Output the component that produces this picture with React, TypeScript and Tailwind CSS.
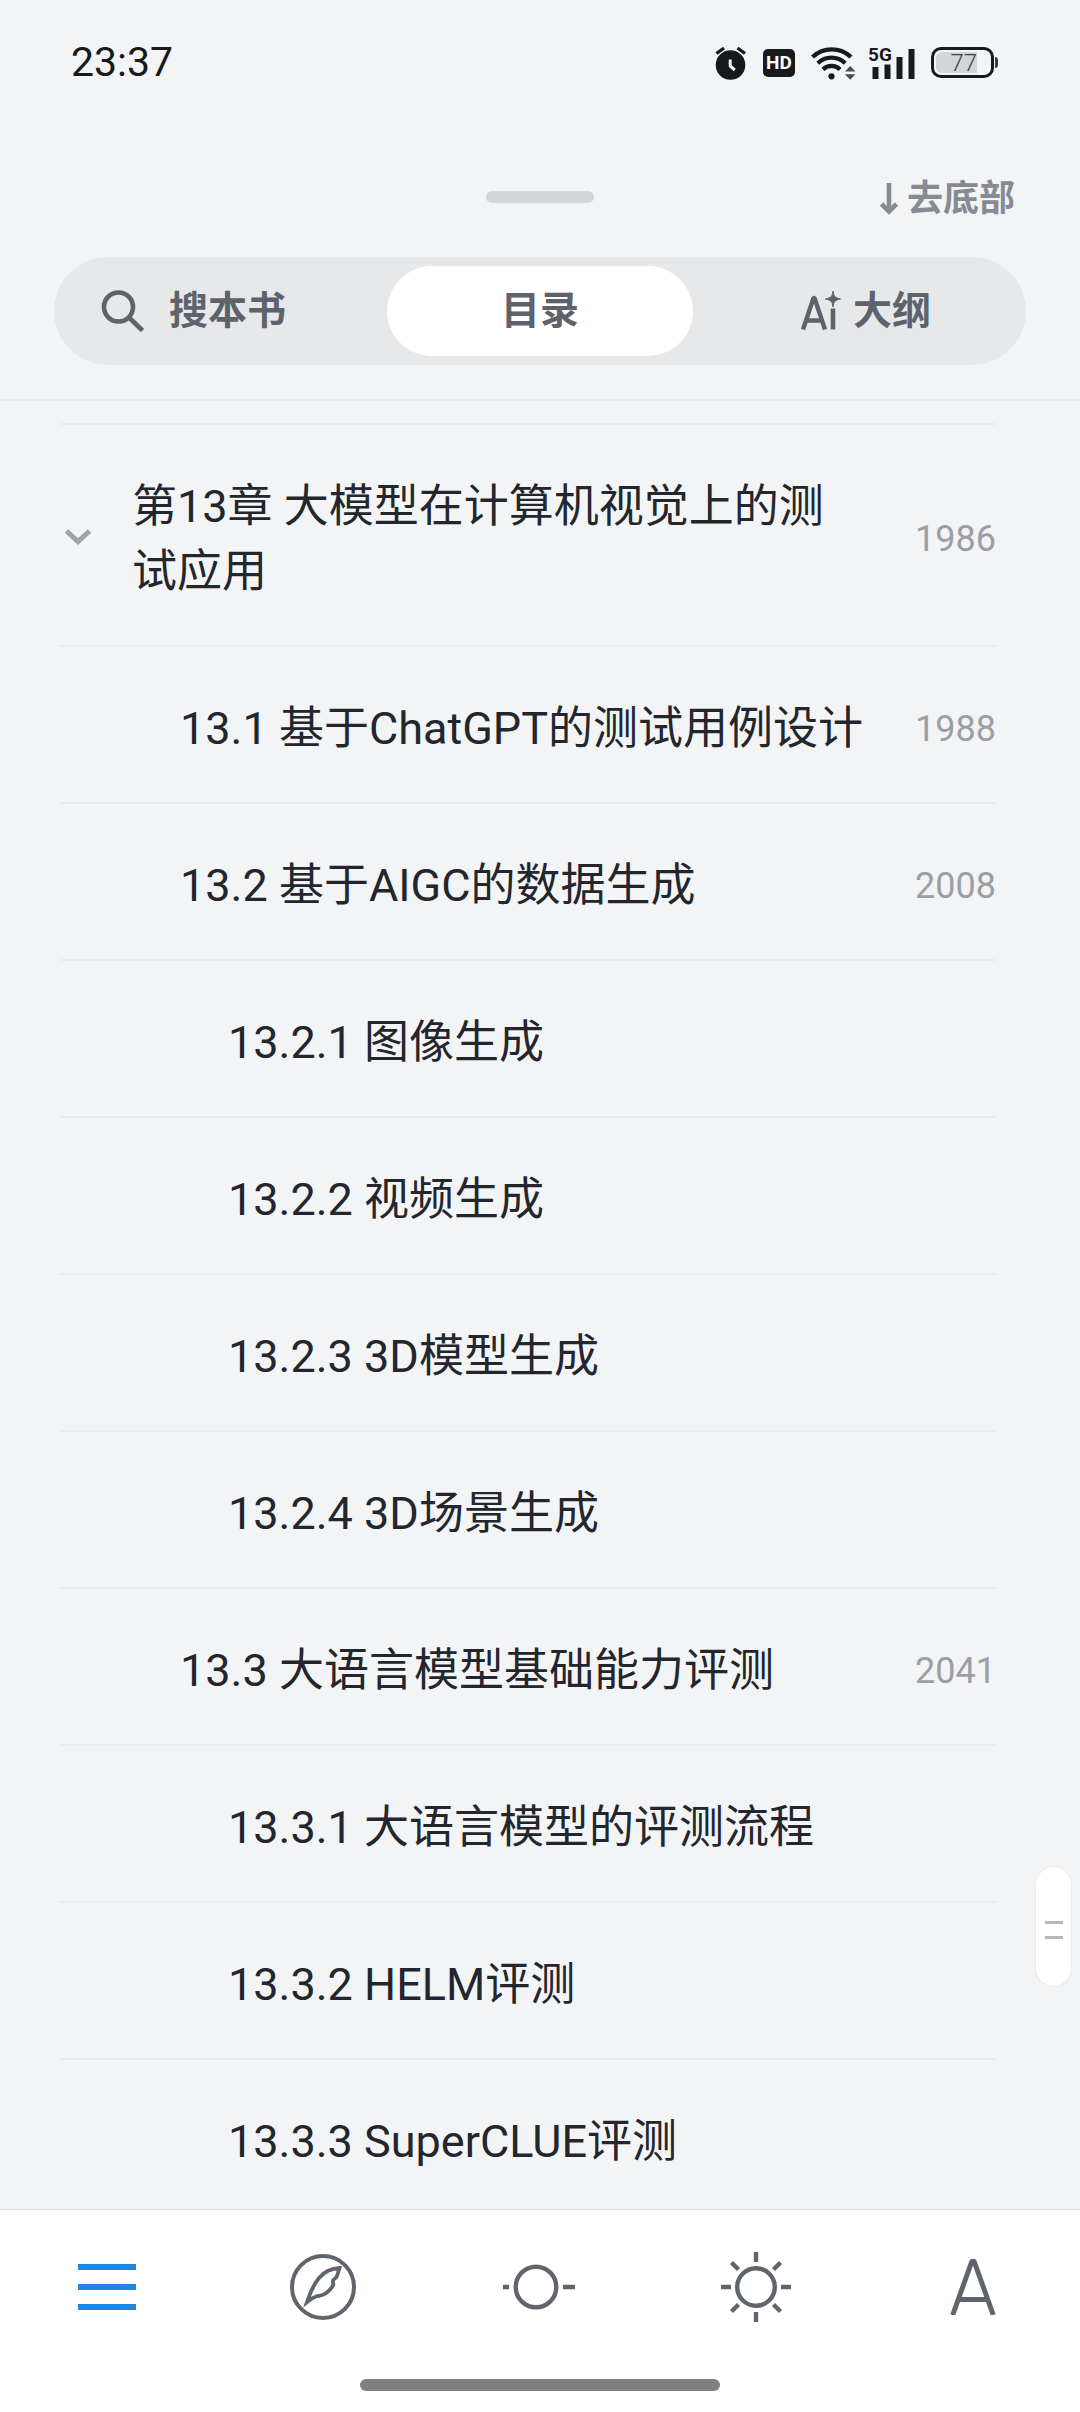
import React, { useState } from "react";

type Entry = { title: string; level: 2 | 3; page?: number };

const entries: Entry[] = [
  { title: "13.1 基于ChatGPT的测试用例设计", level: 2, page: 1988 },
  { title: "13.2 基于AIGC的数据生成", level: 2, page: 2008 },
  { title: "13.2.1 图像生成", level: 3 },
  { title: "13.2.2 视频生成", level: 3 },
  { title: "13.2.3 3D模型生成", level: 3 },
  { title: "13.2.4 3D场景生成", level: 3 },
  { title: "13.3 大语言模型基础能力评测", level: 2, page: 2041 },
  { title: "13.3.1 大语言模型的评测流程", level: 3 },
  { title: "13.3.2 HELM评测", level: 3 },
  { title: "13.3.3 SuperCLUE评测", level: 3 },
];

function StatusBar() {
  return (
    <div className="flex h-[125px] items-center justify-between pr-[82px] pl-[71px] text-[#17191b]">
      <time className="text-[41px] leading-none">23:37</time>
      <div className="flex items-center gap-4">
        <svg width="32" height="34" viewBox="0 0 32 34" aria-label="闹钟">
          <circle cx="15.5" cy="19" r="14.8" fill="currentColor" />
          <path d="M1.5 7.5 9 2M30 7.5 22.5 2" stroke="currentColor" strokeWidth="3.4" fill="none" />
          <path d="M15.2 13.5v6.5l4.6 4" stroke="#f3f4f6" strokeWidth="3" fill="none" />
        </svg>
        <span className="flex h-7 w-8 items-center justify-center rounded-[5px] bg-[#17191b] text-[19px] leading-none font-bold text-white">
          HD
        </span>
        <svg className="overflow-visible" width="42" height="34" viewBox="0 0 42 34" aria-label="无线网络">
          <g fill="none" stroke="currentColor" strokeWidth="4.2">
            <path d="M1.5 11A28 28 0 0 1 40 11" />
            <path d="M6.8 17.2A19.5 19.5 0 0 1 34.2 17.2" />
            <path d="M12 23.4A12 12 0 0 1 29 23.4" />
          </g>
          <circle cx="20.5" cy="30.3" r="3.1" fill="currentColor" />
          <path d="m34 25.5 5.2-5.5 5.2 5.5zM34 28.3h10.4l-5.2 5.5z" fill="#4a4c4e" />
        </svg>
        <svg className="overflow-visible" width="46" height="34" viewBox="0 0 46 34" aria-label="5G">
          <text x="-1" y="15" fontSize="19" fontWeight="700" fill="currentColor">
            5G
          </text>
          <path d="M3.5 21h6v12h-6zM15.500 18.500h6V33h-6zM27.500 11h6v22h-6zM39.500 3h6v30h-6z" fill="currentColor" />
        </svg>
        <div className="flex items-center gap-px">
          <div className="flex h-[31px] w-[63px] items-center rounded-[10px] border-[3px] border-[#17191b] p-0.5">
            <span className="flex h-[21px] w-[41px] items-center justify-end rounded-l-md bg-[#d3d6d9] text-2xl leading-none font-light text-[#3b3d40]">
              77
            </span>
          </div>
          <span className="h-[11px] w-[3px] rounded-r-sm bg-[#3b3d40]" />
        </div>
      </div>
    </div>
  );
}

function Header() {
  return (
    <header className="border-b-2 border-[#e9ebed] pb-[34px]">
      <StatusBar />
      <div className="grid h-[132px] grid-cols-3 items-center px-[65px] pt-3">
        <span className="col-start-2 h-3 w-[108px] justify-self-center rounded-full bg-[#d4d6d8]" />
        <button className="flex items-center gap-2 justify-self-end pt-1 text-4xl leading-none font-bold text-[#868b93]">
          <svg width="20" height="34" viewBox="0 0 20 34" fill="none" stroke="currentColor" aria-hidden="true">
            <path d="M10 1v27" strokeWidth="4.6" />
            <path d="m2.500 22 7.500 7.500 7.500-7.500" strokeWidth="4.600" />
          </svg>
          去底部
        </button>
      </div>
      <div
        role="tablist"
        className="mx-[54px] grid h-[108px] grid-cols-3 gap-[18px] rounded-full bg-[#e7e8ea] p-[9px] text-[39px] leading-none font-bold text-[#5e626b]"
      >
        <button role="tab" aria-selected="false" className="flex items-center gap-6 rounded-full pl-[38px]">
          <svg width="44" height="44" viewBox="0 0 44 44" fill="none" stroke="currentColor" strokeWidth="4.600" aria-hidden="true">
            <circle cx="17.500" cy="18" r="14.500" />
            <path d="M28 28.500 41.500 41.500" />
          </svg>
          搜本书
        </button>
        <button role="tab" aria-selected="true" className="rounded-full bg-white">
          目录
        </button>
        <button role="tab" aria-selected="false" className="flex items-center justify-center gap-3 rounded-full pl-1">
          <svg width="40" height="40" viewBox="0 0 40 40" fill="none" stroke="currentColor" aria-hidden="true">
            <path d="M2 38.500 12.500 7h1L24 38.500M6.200 29.500H20.500" strokeWidth="4.400" strokeLinejoin="bevel" />
            <path d="M32 17.500v21" strokeWidth="4.600" />
            <path
              d="M32 0c.8 5.500 1.800 6.800 7.500 8-5.700 1.200-6.700 2.500-7.500 8-.8-5.500-1.800-6.800-7.500-8 5.700-1.200 6.700-2.500 7.500-8z"
              fill="currentColor"
              strokeWidth="1"
            />
          </svg>
          大纲
        </button>
      </div>
    </header>
  );
}

function Contents() {
  const [open, setOpen] = useState(true);
  return (
    <main className="min-h-0 flex-1 overflow-y-auto pt-[22px] pr-[84px] pl-[60px] text-[45px] leading-[65px] text-[#23262d] [scrollbar-width:none]">
      <ul className="border-t-2 border-[#e9ebed]">
        <li className="border-b-2 border-[#e9ebed]">
          <button
            aria-expanded={open}
            onClick={() => setOpen(!open)}
            className="flex w-full items-center pt-[49px] pb-[41px] text-left"
          >
            <svg className="ml-1 shrink-0" width="28" height="22" viewBox="0 0 28 22" fill="none" stroke="#a0a3a7" strokeWidth="5" aria-hidden="true">
              <path d="m2.500 3 11.500 10.500L25.500 3" />
            </svg>
            <span className="ml-10 flex-1">第13章 大模型在计算机视觉上的测试应用</span>
            <span className="w-[132px] text-right text-4xl text-[#9b9ea4]">1986</span>
          </button>
        </li>
        {open &&
          entries.map((e) => (
            <li key={e.title} className="border-b-2 border-[#e9ebed]">
              <a
                href="#"
                className={
                  e.level === 2
                    ? "flex items-center pt-[49px] pb-[41px] pl-[120px]"
                    : "flex items-center pt-[49px] pb-[41px] pl-[168px]"
                }
              >
                <span className="flex-1">{e.title}</span>
                {e.page && <span className="w-[132px] text-right text-4xl text-[#9b9ea4]">{e.page}</span>}
              </a>
            </li>
          ))}
      </ul>
    </main>
  );
}

function BottomBar() {
  return (
    <footer className="border-t border-[#dcdde0] bg-white pb-[21px] text-[#60646c]">
      <nav className="grid h-[154px] grid-cols-5 *:flex *:items-center *:justify-center">
        <button aria-label="目录" className="text-[#2385e2]">
          <svg width="60" height="48" viewBox="0 0 60 48" fill="currentColor">
            <path d="M0 1h58v6H0zM0 21h58v6H0zM0 41h58v6H0z" />
          </svg>
        </button>
        <button aria-label="发现">
          <svg width="68" height="66" viewBox="0 0 68 66" fill="none" stroke="currentColor" strokeWidth="4">
            <circle cx="33" cy="33" r="31" />
            <path
              d="M17 48C20 39 24 30 29 24c6-7 12-9.600 20.500-10-.8 3-1.600 6-3 9-1 1.500-3.500 2-3.700 4.200l.6 3.300C42 34 39 37 35.500 39.500 32 42 29 41.500 26 42.500 22.500 43.700 20 45.500 17 48z"
              strokeWidth="3.800"
            />
          </svg>
        </button>
        <button aria-label="进度">
          <svg width="74" height="48" viewBox="0 0 74 48" fill="none" stroke="currentColor" strokeWidth="4.400">
            <circle cx="33" cy="24" r="20.300" />
            <path d="M0 24h6M60 24h12" />
          </svg>
        </button>
        <button aria-label="亮度">
          <svg width="70" height="70" viewBox="0 0 70 70" fill="none" stroke="currentColor" strokeWidth="4.400">
            <circle cx="35" cy="35" r="18.800" />
            <path d="M35 0v10M35 60v10M0 35h10M60 35h10M10.500 10.500l7 7M52.500 52.500l7 7M59.500 10.500l-7 7M17.500 52.500l-7 7" />
          </svg>
        </button>
        <button aria-label="字体">
          <svg className="ml-0.5" width="46" height="56" viewBox="0 0 46 56" fill="none" stroke="currentColor" strokeWidth="5">
            <path d="M2.700 56 22 2h2L43.300 56M10 40.500h26" strokeLinejoin="bevel" />
          </svg>
        </button>
      </nav>
      <div className="mx-auto mt-[15px] h-3 w-[360px] rounded-full bg-[#808080]" />
    </footer>
  );
}

export default function App() {
  return (
    <div
      lang="zh-CN"
      className="relative flex h-screen flex-col bg-[#f3f4f6] font-[Roboto,'Noto_Sans_CJK_SC',sans-serif]"
    >
      <Header />
      <Contents />
      <BottomBar />
      <button
        aria-label="快速滚动"
        className="absolute right-[9px] bottom-[426px] flex h-[119px] w-[35px] flex-col items-center justify-center gap-3 rounded-full bg-white pt-1.5 shadow-[0_0_2px_#d8dadc]"
      >
        <span className="h-[3px] w-[18px] bg-[#b8b8b8]" />
        <span className="h-[3px] w-[18px] bg-[#b8b8b8]" />
      </button>
    </div>
  );
}
